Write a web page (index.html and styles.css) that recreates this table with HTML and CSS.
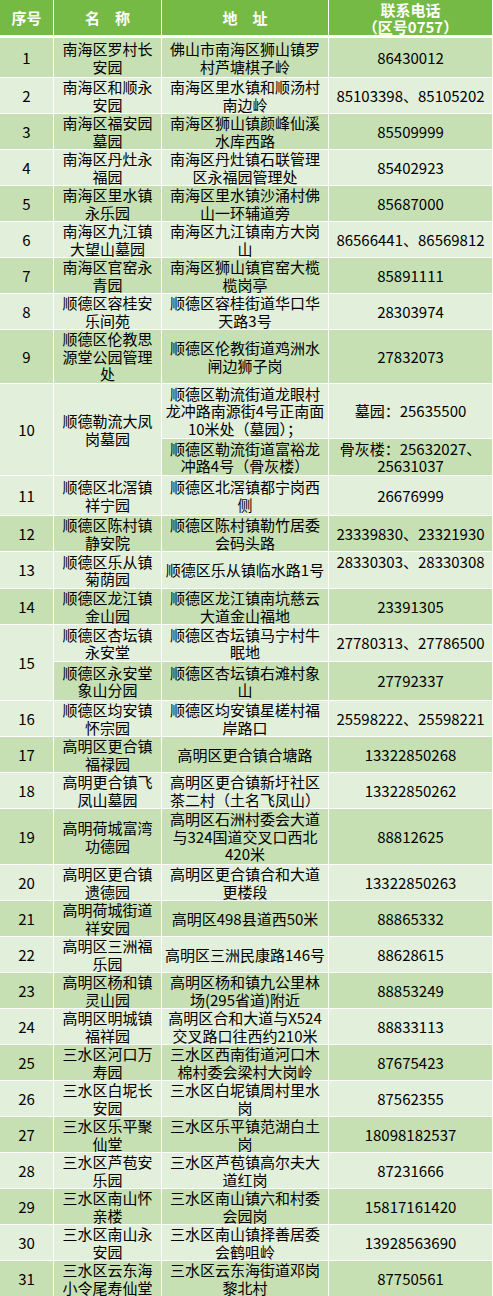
FILE: index.html
```html
<!DOCTYPE html>
<html lang="zh-CN">
<head>
<meta charset="utf-8">
<title>佛山市公墓联系电话</title>
<link rel="stylesheet" href="styles.css">
</head>
<body>
<table class="sheet">
  <colgroup>
    <col class="c-no">
    <col class="c-name">
    <col class="c-addr">
    <col class="c-tel">
  </colgroup>
  <thead>
    <tr>
      <th>序号</th>
      <th>名　称</th>
      <th>地　址</th>
      <th>联系电话<br>（区号0757）</th>
    </tr>
  </thead>
  <tbody>
    <tr class="h39"><td>1</td><td>南海区罗村长<br>安园</td><td>佛山市南海区狮山镇罗<br>村芦塘棋子岭</td><td>86430012</td></tr>
    <tr><td>2</td><td>南海区和顺永<br>安园</td><td>南海区里水镇和顺汤村<br>南边岭</td><td>85103398、85105202</td></tr>
    <tr><td>3</td><td>南海区福安园<br>墓园</td><td>南海区狮山镇颜峰仙溪<br>水库西路</td><td>85509999</td></tr>
    <tr><td>4</td><td>南海区丹灶永<br>福园</td><td>南海区丹灶镇石联管理<br>区永福园管理处</td><td>85402923</td></tr>
    <tr><td>5</td><td>南海区里水镇<br>永乐园</td><td>南海区里水镇沙涌村佛<br>山一环辅道旁</td><td>85687000</td></tr>
    <tr><td>6</td><td>南海区九江镇<br>大望山墓园</td><td>南海区九江镇南方大岗<br>山</td><td>86566441、86569812</td></tr>
    <tr><td>7</td><td>南海区官窑永<br>青园</td><td>南海区狮山镇官窑大榄<br>榄岗亭</td><td>85891111</td></tr>
    <tr><td>8</td><td>顺德区容桂安<br>乐间苑</td><td>顺德区容桂街道华口华<br>天路3号</td><td>28303974</td></tr>
    <tr class="h53"><td>9</td><td>顺德区伦教思<br>源堂公园管理<br>处</td><td>顺德区伦教街道鸡洲水<br>闸边狮子岗</td><td>27832073</td></tr>
    <tr class="h54"><td rowspan="2">10</td><td rowspan="2">顺德勒流大凤<br>岗墓园</td><td>顺德区勒流街道龙眼村<br>龙冲路南源街4号正南面<br>10米处（墓园）；</td><td>墓园：25635500</td></tr>
    <tr class="h36"><td>顺德区勒流街道富裕龙<br>冲路4号（骨灰楼）</td><td>骨灰楼：25632027、<br>25631037</td></tr>
    <tr class="h39"><td>11</td><td>顺德区北滘镇<br>祥宁园</td><td>顺德区北滘镇都宁岗西<br>侧</td><td>26676999</td></tr>
    <tr><td>12</td><td>顺德区陈村镇<br>静安院</td><td>顺德区陈村镇勒竹居委<br>会码头路</td><td>23339830、23321930</td></tr>
    <tr><td>13</td><td>顺德区乐从镇<br>菊荫园</td><td>顺德区乐从镇临水路1号</td><td class="top">28330303、28330308</td></tr>
    <tr><td>14</td><td>顺德区龙江镇<br>金山园</td><td>顺德区龙江镇南坑慈云<br>大道金山福地</td><td>23391305</td></tr>
    <tr class="h36"><td rowspan="2">15</td><td>顺德区杏坛镇<br>永安堂</td><td>顺德区杏坛镇马宁村牛<br>眠地</td><td>27780313、27786500</td></tr>
    <tr class="h38"><td>顺德区永安堂<br>象山分园</td><td>顺德区杏坛镇右滩村象<br>山</td><td>27792337</td></tr>
    <tr><td>16</td><td>顺德区均安镇<br>怀宗园</td><td>顺德区均安镇星槎村福<br>岸路口</td><td>25598222、25598221</td></tr>
    <tr><td>17</td><td>高明区更合镇<br>福禄园</td><td>高明区更合镇合塘路</td><td>13322850268</td></tr>
    <tr><td>18</td><td>高明更合镇飞<br>凤山墓园</td><td>高明区更合镇新圩社区<br>茶二村（土名飞凤山）</td><td>13322850262</td></tr>
    <tr class="h55"><td>19</td><td>高明荷城富湾<br>功德园</td><td>高明区石洲村委会大道<br>与324国道交叉口西北<br>420米</td><td>88812625</td></tr>
    <tr><td>20</td><td>高明区更合镇<br>遗德园</td><td>高明区更合镇合和大道<br>更楼段</td><td>13322850263</td></tr>
    <tr><td>21</td><td>高明荷城街道<br>祥安园</td><td>高明区498县道西50米</td><td>88865332</td></tr>
    <tr><td>22</td><td>高明区三洲福<br>乐园</td><td>高明区三洲民康路146号</td><td>88628615</td></tr>
    <tr><td>23</td><td>高明区杨和镇<br>灵山园</td><td>高明区杨和镇九公里林<br>场(295省道)附近</td><td>88853249</td></tr>
    <tr><td>24</td><td>高明区明城镇<br>福祥园</td><td>高明区合和大道与X524<br>交叉路口往西约210米</td><td>88833113</td></tr>
    <tr><td>25</td><td>三水区河口万<br>寿园</td><td>三水区西南街道河口木<br>棉村委会梁村大岗岭</td><td>87675423</td></tr>
    <tr><td>26</td><td>三水区白坭长<br>安园</td><td>三水区白坭镇周村里水<br>岗</td><td>87562355</td></tr>
    <tr><td>27</td><td>三水区乐平聚<br>仙堂</td><td>三水区乐平镇范湖白土<br>岗</td><td>18098182537</td></tr>
    <tr><td>28</td><td>三水区芦苞安<br>乐园</td><td>三水区芦苞镇高尔夫大<br>道红岗</td><td>87231666</td></tr>
    <tr><td>29</td><td>三水区南山怀<br>亲楼</td><td>三水区南山镇六和村委<br>会园岗</td><td>15817161420</td></tr>
    <tr><td>30</td><td>三水区南山永<br>安园</td><td>三水区南山镇择善居委<br>会鹤咀岭</td><td>13928563690</td></tr>
    <tr><td>31</td><td>三水区云东海<br>小令尾寿仙堂</td><td>三水区云东海街道邓岗<br>黎北村</td><td>87750561</td></tr>
  </tbody>
</table>
</body>
</html>
```

FILE: styles.css
```css
html, body {
  margin: 0;
  padding: 0;
  background: #ffffff;
}

body {
  font-family: "Noto Sans CJK SC", "Noto Sans", sans-serif;
  color: #000000;
  overflow: hidden;
}

.sheet {
  border-collapse: separate;
  border-spacing: 1px;
  background: #ffffff;
  table-layout: fixed;
  width: 494px;
  margin: -1px 0 0 -1px;
}

.c-no { width: 53px; }
.c-name { width: 107px; }
.c-addr { width: 166px; }
.c-tel { width: 163px; }

.sheet th {
  height: 35px;
  padding: 0;
  background: #76ba46;
  color: #ffffff;
  font-weight: 700;
  font-size: 15px;
  line-height: 17px;
  text-align: center;
  vertical-align: middle;
  border-bottom: 2px solid #ffffff;
}

.sheet td {
  height: 35px;
  padding: 0 1px;
  font-size: 15px;
  line-height: 17.5px;
  text-align: center;
  vertical-align: middle;
  white-space: nowrap;
}

.sheet tbody tr:nth-child(odd) td { background: #c6e0b4; }
.sheet tbody tr:nth-child(even) td { background: #e2efda; }

.sheet tr.h36 td { height: 36px; }
.sheet tr.h38 td { height: 38px; }
.sheet tr.h39 td { height: 39px; }
.sheet tr.h53 td { height: 53px; }
.sheet tr.h54 td { height: 54px; }
.sheet tr.h55 td { height: 55px; }

.sheet td.top {
  vertical-align: top;
  padding-top: 1px;
}
```
